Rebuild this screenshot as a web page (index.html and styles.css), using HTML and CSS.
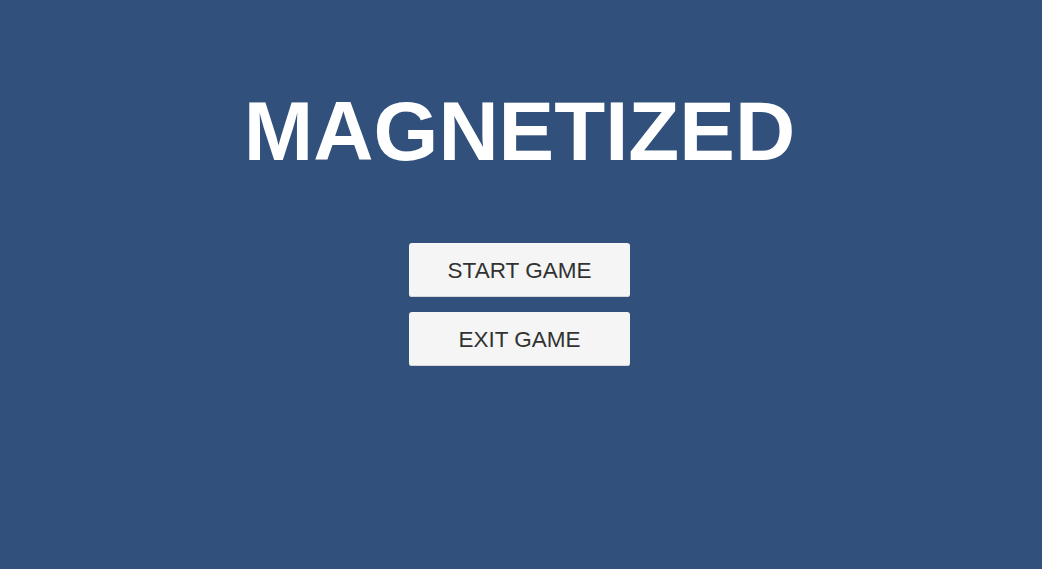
FILE: index.html
```html
<!DOCTYPE html>
<html lang="en">
<head>
<meta charset="utf-8">
<title>Magnetized</title>
<link rel="stylesheet" href="styles.css">
</head>
<body>
<main class="menu">
  <h1 class="title">MAGNETIZED</h1>
  <div class="buttons">
    <button class="btn">START GAME</button>
    <button class="btn">EXIT GAME</button>
  </div>
</main>
</body>
</html>
```
FILE: styles.css
```css
html, body {
  margin: 0;
  padding: 0;
  height: 100%;
}
body {
  background: #31507b;
  font-family: "Liberation Sans", Arial, sans-serif;
}
.menu {
  display: flex;
  flex-direction: column;
  align-items: center;
  padding-top: 90px;
  padding-right: 3px;
}
.title {
  margin: 0;
  font-size: 83.4px;
  line-height: 84px;
  font-weight: 700;
  color: #ffffff;
  letter-spacing: 0;
}
.buttons {
  margin-top: 69px;
  display: flex;
  flex-direction: column;
  gap: 15px;
}
.btn {
  width: 221px;
  height: 54px;
  padding: 1px 0 0;
  border: none;
  border-radius: 3px;
  background: #f5f5f5;
  box-shadow: inset 0 -1px 0 #d6d6d6;
  color: #323232;
  font-family: "Liberation Sans", Arial, sans-serif;
  font-size: 22.5px;
  line-height: 53px;
  cursor: pointer;
}
```
